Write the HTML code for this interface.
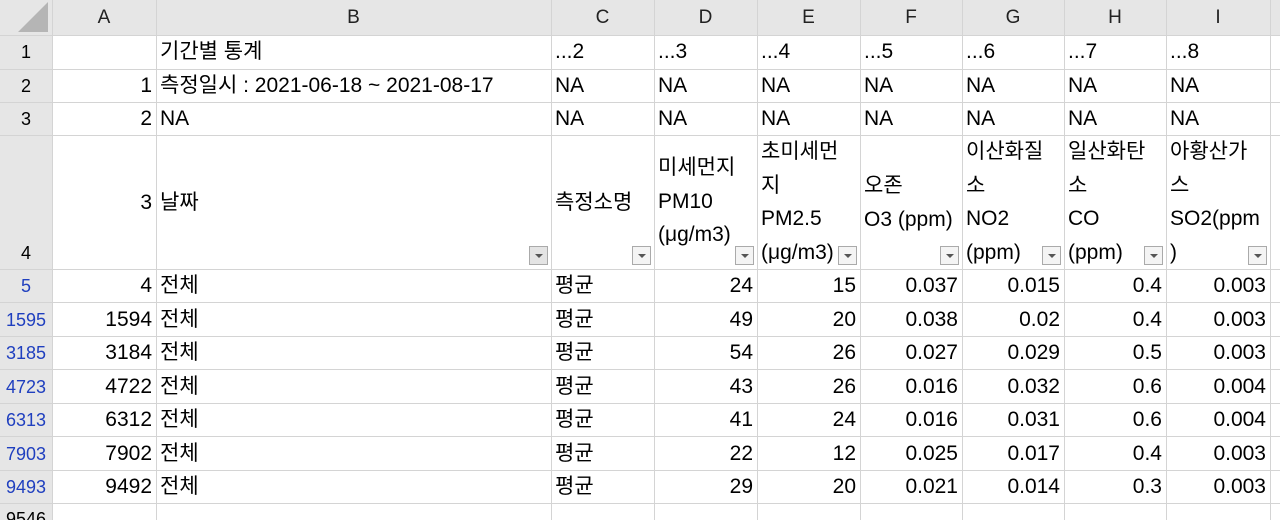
<!DOCTYPE html>
<html><head><meta charset="utf-8"><style>
html,body{margin:0;padding:0;background:#fff;overflow:hidden;width:1280px;height:520px;position:relative;font-family:"Liberation Sans","Noto Sans CJK KR",sans-serif;font-size:21px;color:#000}
div{position:absolute;box-sizing:border-box}
.v{top:0;width:1px;height:520px;background:#d4d4d4}
.hl{left:0;height:1px;width:1280px;background:#d4d4d4}
.t{height:34px;line-height:34px;white-space:nowrap;padding:0 4px;overflow:hidden}
.r{text-align:right}
.c{text-align:center;padding:0}
.ch{font-size:19px;color:#222}
.rn{font-size:18px}
.b{color:#1f3fbf}
.ml{line-height:33.5px;white-space:nowrap;padding:0 4px}
.fb{width:19px;height:19px;border:1px solid #aaa;background:#f4f4f4;top:246px}
.fb:after{content:"";position:absolute;left:5px;top:7px;border-left:4px solid transparent;border-right:4px solid transparent;border-top:4px solid #555}
</style></head><body>
<div style="left:0;top:0;width:1280px;height:35px;background:#e6e6e6"></div>
<div style="left:0;top:0;width:52px;height:520px;background:#e6e6e6"></div>
<div style="left:18px;top:2px;width:0;height:0;border-left:30px solid transparent;border-bottom:30px solid #b5b5b5"></div>

<div class="v" style="left:52px"></div><div class="v" style="left:156px"></div><div class="v" style="left:551px"></div><div class="v" style="left:654px"></div><div class="v" style="left:757px"></div><div class="v" style="left:860px"></div><div class="v" style="left:962px"></div><div class="v" style="left:1064px"></div><div class="v" style="left:1166px"></div><div class="v" style="left:1270px"></div>
<div class="hl" style="top:35px"></div><div class="hl" style="top:69px"></div><div class="hl" style="top:102px"></div><div class="hl" style="top:135px"></div><div class="hl" style="top:269px"></div><div class="hl" style="top:302px"></div><div class="hl" style="top:336px"></div><div class="hl" style="top:369px"></div><div class="hl" style="top:403px"></div><div class="hl" style="top:436px"></div><div class="hl" style="top:470px"></div><div class="hl" style="top:503px"></div>

<!-- column headers -->
<div class="t c ch" style="left:52px;width:104px;top:1px">A</div>
<div class="t c ch" style="left:156px;width:395px;top:1px">B</div>
<div class="t c ch" style="left:551px;width:103px;top:1px">C</div>
<div class="t c ch" style="left:654px;width:103px;top:1px">D</div>
<div class="t c ch" style="left:757px;width:103px;top:1px">E</div>
<div class="t c ch" style="left:860px;width:102px;top:1px">F</div>
<div class="t c ch" style="left:962px;width:102px;top:1px">G</div>
<div class="t c ch" style="left:1064px;width:102px;top:1px">H</div>
<div class="t c ch" style="left:1166px;width:104px;top:1px">I</div>

<!-- row headers -->
<div class="t c rn" style="left:0;width:52px;top:35px">1</div>
<div class="t c rn" style="left:0;width:52px;top:69px">2</div>
<div class="t c rn" style="left:0;width:52px;top:102px">3</div>
<div class="t c rn" style="left:0;width:52px;top:236px">4</div>
<div class="t c rn b" style="left:0;width:52px;top:269px">5</div>
<div class="t c rn b" style="left:0;width:52px;top:303px">1595</div>
<div class="t c rn b" style="left:0;width:52px;top:336px">3185</div>
<div class="t c rn b" style="left:0;width:52px;top:370px">4723</div>
<div class="t c rn b" style="left:0;width:52px;top:403px">6313</div>
<div class="t c rn b" style="left:0;width:52px;top:437px">7903</div>
<div class="t c rn b" style="left:0;width:52px;top:470px">9493</div>
<div class="t c rn" style="left:0;width:52px;top:502px">9546</div>

<!-- rows 1-3 -->
<div class="t" style="left:156px;top:35px">기간별 통계</div>
<div class="t" style="left:551px;top:35px">...2</div><div class="t" style="left:654px;top:35px">...3</div><div class="t" style="left:757px;top:35px">...4</div><div class="t" style="left:860px;top:35px">...5</div><div class="t" style="left:962px;top:35px">...6</div><div class="t" style="left:1064px;top:35px">...7</div><div class="t" style="left:1166px;top:35px">...8</div>
<div class="t r" style="left:52px;width:104px;top:69px">1</div>
<div class="t" style="left:156px;top:69px">측정일시 : 2021-06-18 ~ 2021-08-17</div>
<div class="t" style="left:551px;top:69px">NA</div><div class="t" style="left:654px;top:69px">NA</div><div class="t" style="left:757px;top:69px">NA</div><div class="t" style="left:860px;top:69px">NA</div><div class="t" style="left:962px;top:69px">NA</div><div class="t" style="left:1064px;top:69px">NA</div><div class="t" style="left:1166px;top:69px">NA</div>
<div class="t r" style="left:52px;width:104px;top:102px">2</div>
<div class="t" style="left:156px;top:102px">NA</div>
<div class="t" style="left:551px;top:102px">NA</div><div class="t" style="left:654px;top:102px">NA</div><div class="t" style="left:757px;top:102px">NA</div><div class="t" style="left:860px;top:102px">NA</div><div class="t" style="left:962px;top:102px">NA</div><div class="t" style="left:1064px;top:102px">NA</div><div class="t" style="left:1166px;top:102px">NA</div>

<!-- row 4 -->
<div class="t r" style="left:52px;width:104px;top:186px">3</div>
<div class="t" style="left:156px;top:186px">날짜</div>
<div class="t" style="left:551px;top:186px">측정소명</div>
<div class="ml" style="left:654px;top:151px">미세먼지<br>PM10<br>(μg/m3)</div>
<div class="ml" style="left:757px;top:135px">초미세먼<br>지<br>PM2.5<br>(μg/m3)</div>
<div class="ml" style="left:860px;top:169px">오존<br>O3 (ppm)</div>
<div class="ml" style="left:962px;top:135px">이산화질<br>소<br>NO2<br>(ppm)</div>
<div class="ml" style="left:1064px;top:135px">일산화탄<br>소<br>CO<br>(ppm)</div>
<div class="ml" style="left:1166px;top:135px">아황산가<br>스<br>SO2(ppm<br>)</div>
<div class="fb" style="left:529px;background:#e4e4e4"></div>
<div class="fb" style="left:632px"></div>
<div class="fb" style="left:735px"></div>
<div class="fb" style="left:838px"></div>
<div class="fb" style="left:940px"></div>
<div class="fb" style="left:1042px"></div>
<div class="fb" style="left:1144px"></div>
<div class="fb" style="left:1248px"></div>

<!-- data -->
<div class="t r" style="left:52px;width:104px;top:269px">4</div><div class="t" style="left:156px;top:269px">전체</div><div class="t" style="left:551px;top:269px">평균</div><div class="t r" style="left:654px;width:103px;top:269px">24</div><div class="t r" style="left:757px;width:103px;top:269px">15</div><div class="t r" style="left:860px;width:102px;top:269px">0.037</div><div class="t r" style="left:962px;width:102px;top:269px">0.015</div><div class="t r" style="left:1064px;width:102px;top:269px">0.4</div><div class="t r" style="left:1166px;width:104px;top:269px">0.003</div>
<div class="t r" style="left:52px;width:104px;top:303px">1594</div><div class="t" style="left:156px;top:303px">전체</div><div class="t" style="left:551px;top:303px">평균</div><div class="t r" style="left:654px;width:103px;top:303px">49</div><div class="t r" style="left:757px;width:103px;top:303px">20</div><div class="t r" style="left:860px;width:102px;top:303px">0.038</div><div class="t r" style="left:962px;width:102px;top:303px">0.02</div><div class="t r" style="left:1064px;width:102px;top:303px">0.4</div><div class="t r" style="left:1166px;width:104px;top:303px">0.003</div>
<div class="t r" style="left:52px;width:104px;top:336px">3184</div><div class="t" style="left:156px;top:336px">전체</div><div class="t" style="left:551px;top:336px">평균</div><div class="t r" style="left:654px;width:103px;top:336px">54</div><div class="t r" style="left:757px;width:103px;top:336px">26</div><div class="t r" style="left:860px;width:102px;top:336px">0.027</div><div class="t r" style="left:962px;width:102px;top:336px">0.029</div><div class="t r" style="left:1064px;width:102px;top:336px">0.5</div><div class="t r" style="left:1166px;width:104px;top:336px">0.003</div>
<div class="t r" style="left:52px;width:104px;top:370px">4722</div><div class="t" style="left:156px;top:370px">전체</div><div class="t" style="left:551px;top:370px">평균</div><div class="t r" style="left:654px;width:103px;top:370px">43</div><div class="t r" style="left:757px;width:103px;top:370px">26</div><div class="t r" style="left:860px;width:102px;top:370px">0.016</div><div class="t r" style="left:962px;width:102px;top:370px">0.032</div><div class="t r" style="left:1064px;width:102px;top:370px">0.6</div><div class="t r" style="left:1166px;width:104px;top:370px">0.004</div>
<div class="t r" style="left:52px;width:104px;top:403px">6312</div><div class="t" style="left:156px;top:403px">전체</div><div class="t" style="left:551px;top:403px">평균</div><div class="t r" style="left:654px;width:103px;top:403px">41</div><div class="t r" style="left:757px;width:103px;top:403px">24</div><div class="t r" style="left:860px;width:102px;top:403px">0.016</div><div class="t r" style="left:962px;width:102px;top:403px">0.031</div><div class="t r" style="left:1064px;width:102px;top:403px">0.6</div><div class="t r" style="left:1166px;width:104px;top:403px">0.004</div>
<div class="t r" style="left:52px;width:104px;top:437px">7902</div><div class="t" style="left:156px;top:437px">전체</div><div class="t" style="left:551px;top:437px">평균</div><div class="t r" style="left:654px;width:103px;top:437px">22</div><div class="t r" style="left:757px;width:103px;top:437px">12</div><div class="t r" style="left:860px;width:102px;top:437px">0.025</div><div class="t r" style="left:962px;width:102px;top:437px">0.017</div><div class="t r" style="left:1064px;width:102px;top:437px">0.4</div><div class="t r" style="left:1166px;width:104px;top:437px">0.003</div>
<div class="t r" style="left:52px;width:104px;top:470px">9492</div><div class="t" style="left:156px;top:470px">전체</div><div class="t" style="left:551px;top:470px">평균</div><div class="t r" style="left:654px;width:103px;top:470px">29</div><div class="t r" style="left:757px;width:103px;top:470px">20</div><div class="t r" style="left:860px;width:102px;top:470px">0.021</div><div class="t r" style="left:962px;width:102px;top:470px">0.014</div><div class="t r" style="left:1064px;width:102px;top:470px">0.3</div><div class="t r" style="left:1166px;width:104px;top:470px">0.003</div>
</body></html>
